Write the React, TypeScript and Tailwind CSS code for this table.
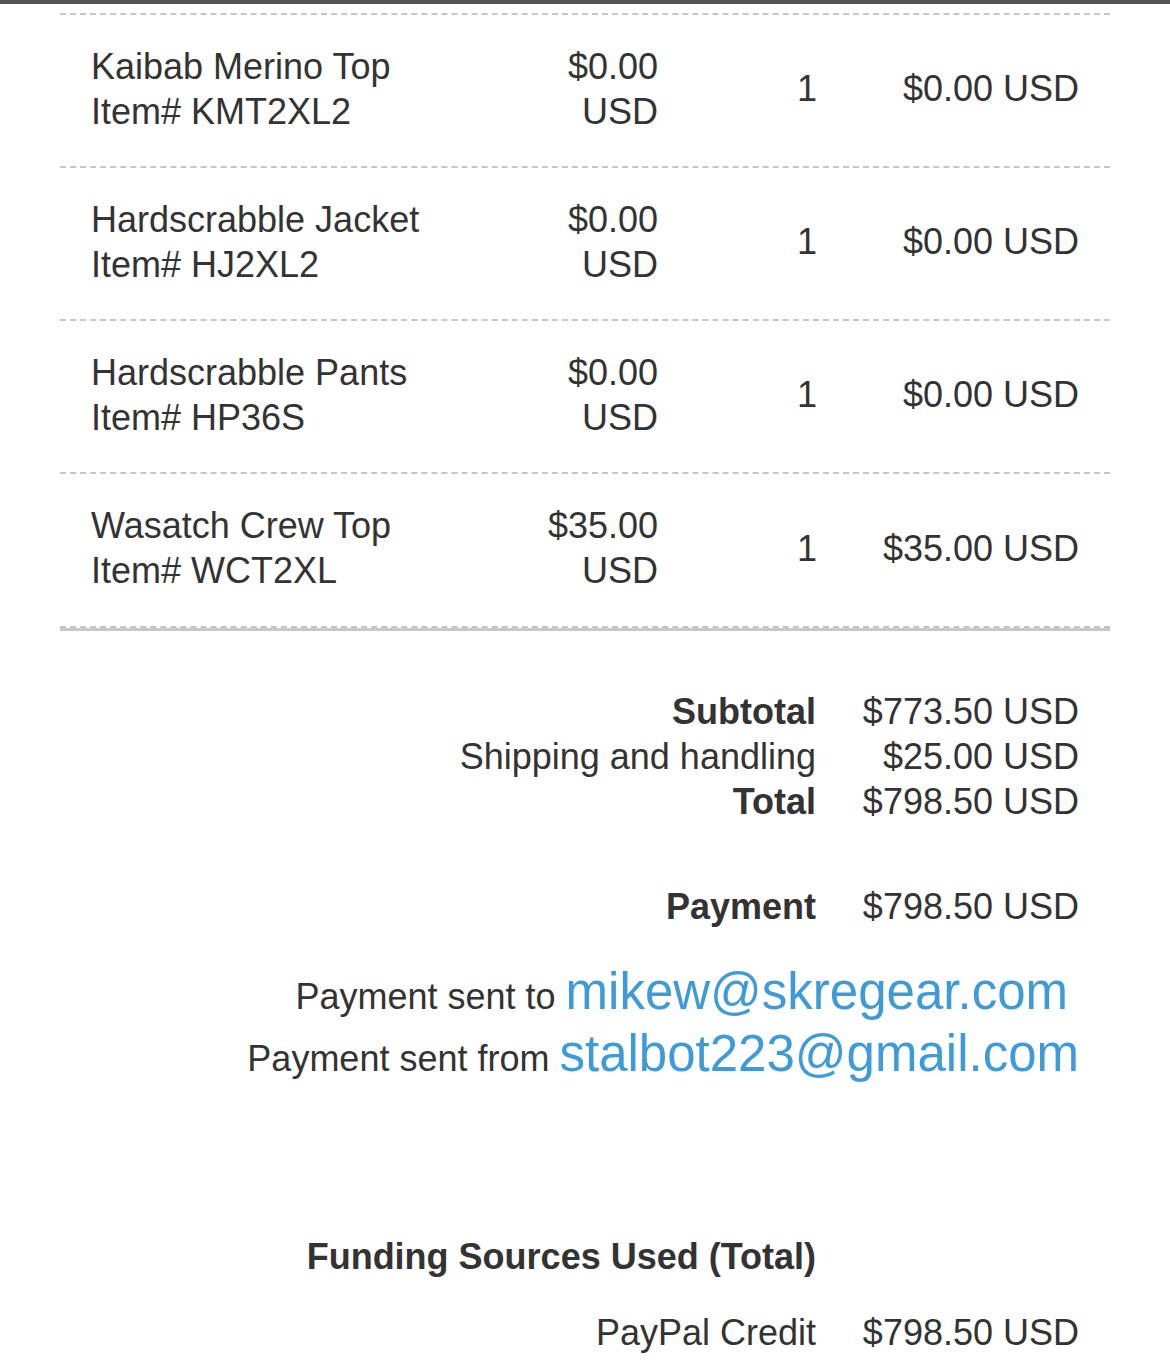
import React from "react";

const items = [
  { name: "Kaibab Merino Top", sku: "KMT2XL2", price: "$0.00", qty: 1, amount: "$0.00 USD" },
  { name: "Hardscrabble Jacket", sku: "HJ2XL2", price: "$0.00", qty: 1, amount: "$0.00 USD" },
  { name: "Hardscrabble Pants", sku: "HP36S", price: "$0.00", qty: 1, amount: "$0.00 USD" },
  { name: "Wasatch Crew Top", sku: "WCT2XL", price: "$35.00", qty: 1, amount: "$35.00 USD" },
];

const totals = [
  { label: "Subtotal", value: "$773.50 USD", bold: true },
  { label: "Shipping and handling", value: "$25.00 USD", bold: false },
  { label: "Total", value: "$798.50 USD", bold: true },
];

const App: React.FC = () => {
  return (
    <div
      className="min-h-[1368px] bg-white text-[#333] text-[36px] leading-[45px] border-t-4 border-[#555]"
      style={{ fontFamily: '"Liberation Sans", Arial, sans-serif' }}
    >
      <div className="mx-[60px] pt-[9px]">
        <div className="border-b-2 border-dashed border-[#c6c6c6]" />
        {items.map((item, i) => (
          <div
            key={item.sku}
            className={
              i === items.length - 1
                ? "h-[154px] pb-[4px] grid grid-cols-[420px_147px_1fr_203px] items-center px-[31px] border-b-2 border-dashed border-[#c4c4c4]"
                : "h-[153px] pb-[4px] grid grid-cols-[420px_147px_1fr_203px] items-center px-[31px] border-b-2 border-dashed border-[#c6c6c6]"
            }
          >
            <div>
              <div>{item.name}</div>
              <div>Item# {item.sku}</div>
            </div>
            <div className="text-right">
              <div>{item.price}</div>
              <div>USD</div>
            </div>
            <div className="text-right pr-[59px]">{item.qty}</div>
            <div className="text-right">{item.amount}</div>
          </div>
        ))}
        <div className="border-b-[3px] border-[#c8c8c8]" />
      </div>

      <div className="pr-[91px] pt-[58px]">
        <div className="grid grid-cols-[1fr_217px] gap-x-[46px]">
          {totals.map((t) => (
            <React.Fragment key={t.label}>
              <div className={t.bold ? "text-right font-bold" : "text-right"}>{t.label}</div>
              <div className="text-right">{t.value}</div>
            </React.Fragment>
          ))}
        </div>

        <div className="grid grid-cols-[1fr_217px] gap-x-[46px] mt-[60px]">
          <div className="text-right font-bold">Payment</div>
          <div className="text-right">$798.50 USD</div>
        </div>

        <div className="mt-[37px] flex flex-col items-end">
          <div className="pr-[11px] h-[62px] leading-[62px]">
            Payment sent to{" "}
            <a href="#" className="text-[51px] leading-[40px] text-[#3f9bd8]">mikew@skregear.com</a>
          </div>
          <div className="h-[62px] leading-[62px]">
            Payment sent from{" "}
            <a href="#" className="text-[51px] leading-[40px] text-[#3f9bd8]">stalbot223@gmail.com</a>
          </div>
        </div>

        <div className="grid grid-cols-[1fr_217px] gap-x-[46px] mt-[144px]">
          <div className="text-right font-bold">Funding Sources Used (Total)</div>
          <div />
        </div>

        <div className="grid grid-cols-[1fr_217px] gap-x-[46px] mt-[31px]">
          <div className="text-right">PayPal Credit</div>
          <div className="text-right">$798.50 USD</div>
        </div>
      </div>
    </div>
  );
};

export default App;
